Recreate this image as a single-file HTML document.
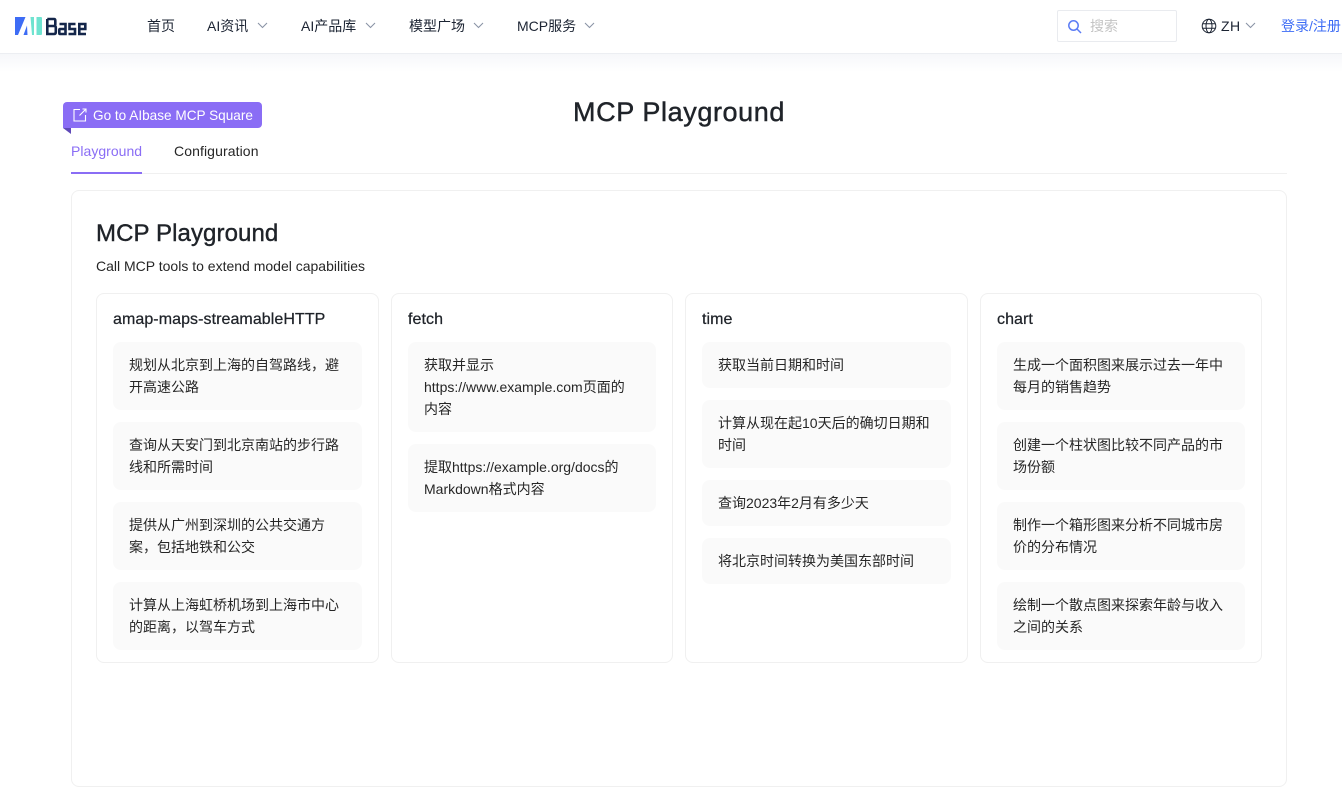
<!DOCTYPE html>
<html lang="zh">
<head>
<meta charset="utf-8">
<title>MCP Playground</title>
<style>
html,body{margin:0;padding:0;width:1342px;height:787px;overflow:hidden;background:#fff;}
body{position:relative;font-family:"Liberation Sans","Noto Sans CJK SC",sans-serif;color:#1f2329;}
.a{position:absolute;white-space:nowrap;}
.hdr{position:absolute;left:0;top:0;width:1342px;height:53px;background:#fff;border-bottom:1px solid #eceef2;}
.grad{position:absolute;left:0;top:54px;width:1342px;height:18px;background:linear-gradient(#f6f7fa,#fff);}
.nav{position:absolute;top:16px;font-size:14px;line-height:20px;color:#1c2433;white-space:nowrap;}
.chev{position:absolute;top:22px;}
.card{position:absolute;top:293px;height:368px;background:#fff;border:1px solid #f0f0f0;border-radius:8px;}
.card h3{position:absolute;left:16px;top:15px;margin:0;font-size:16px;line-height:22px;font-weight:400;color:#1f2329;white-space:nowrap;-webkit-text-stroke:.25px #1f2329;letter-spacing:.07px;}
.it{position:absolute;left:16px;padding:12px 16px;background:#fafafa;border-radius:8px;font-size:14px;line-height:22px;color:#262626;white-space:nowrap;}
.w1{width:217px}.w2{width:216px}
</style>
</head>
<body>
<div class="hdr"></div>
<div class="grad"></div>

<svg class="a" style="left:15px;top:17px" width="72" height="19" viewBox="0 0 72 19">
<rect x="0" y="0" width="17" height="18" fill="#3d6cf5"/>
<rect x="15" y="0" width="12" height="18" rx="1" fill="#6fe3d0"/>
<path d="M10.500 0H15.500L17 18H12.500L12 8.500L8.500 18H3Z" fill="#fff"/>
<rect x="19" y="0" width="2.500" height="18" fill="#fff"/>
<g fill="none" stroke="#14264a" stroke-width="2.600">
<path d="M32.300 2H39Q40.300 2 40.300 3.500V7.500Q40.300 9 39 9H33M39 9Q40.800 9 40.800 10.500V15Q40.800 17 39 17H32.300V2"/>
<path d="M44.500 7H50.500V17H45Q44.300 17 44.300 16V13Q44.300 12 45 12H50.500"/>
<path d="M60.500 7H54.500V12H60V17H53.500"/>
<path d="M71 17H64.300V7H70.300V12H64.300"/>
</g>
</svg>

<div class="nav" style="left:147px">首页</div>
<div class="nav" style="left:207px">AI资讯</div>
<svg class="chev" style="left:257px" width="11" height="7" viewBox="0 0 11 7"><path d="M1 1L5.500 5.500L10 1" fill="none" stroke="#8a94a6" stroke-width="1.100"/></svg>
<div class="nav" style="left:301px">AI产品库</div>
<svg class="chev" style="left:365px" width="11" height="7" viewBox="0 0 11 7"><path d="M1 1L5.500 5.500L10 1" fill="none" stroke="#8a94a6" stroke-width="1.100"/></svg>
<div class="nav" style="left:409px">模型广场</div>
<svg class="chev" style="left:473px" width="11" height="7" viewBox="0 0 11 7"><path d="M1 1L5.500 5.500L10 1" fill="none" stroke="#8a94a6" stroke-width="1.100"/></svg>
<div class="nav" style="left:517px">MCP服务</div>
<svg class="chev" style="left:584px" width="11" height="7" viewBox="0 0 11 7"><path d="M1 1L5.500 5.500L10 1" fill="none" stroke="#8a94a6" stroke-width="1.100"/></svg>

<div class="a" style="left:1057px;top:10px;width:118px;height:30px;border:1px solid #e9ebef;border-radius:2px;background:#fff"></div>
<svg class="a" style="left:1067px;top:19px" width="15" height="15" viewBox="0 0 15 15"><circle cx="6.500" cy="6.500" r="4.700" fill="none" stroke="#5b7cf5" stroke-width="1.500"/><path d="M10 10L14 14" stroke="#5b7cf5" stroke-width="1.500"/></svg>
<div class="a" style="left:1090px;top:16px;font-size:14px;line-height:20px;color:#c4c4c4">搜索</div>

<svg class="a" style="left:1201px;top:18px" width="16" height="16" viewBox="0 0 16 16" fill="none" stroke="#1c2433" stroke-width="1"><circle cx="8" cy="8" r="6.800"/><ellipse cx="8" cy="8" rx="3" ry="6.800"/><path d="M1.500 5.800H14.500M1.500 10.200H14.500"/></svg>
<div class="a" style="left:1221px;top:16px;font-size:14px;line-height:20px;color:#1c2433;letter-spacing:.4px">ZH</div>
<svg class="chev" style="left:1245px" width="11" height="7" viewBox="0 0 11 7"><path d="M1 1L5.500 5.500L10 1" fill="none" stroke="#8a94a6" stroke-width="1.100"/></svg>
<div class="a" style="left:1281px;top:16px;font-size:14px;line-height:20px;color:#3d6cf5">登录/注册</div>

<div class="a" style="left:573px;top:94px;font-size:27px;line-height:36px;font-weight:400;color:#1f2329;-webkit-text-stroke:.45px #1f2329;letter-spacing:.6px">MCP Playground</div>

<div class="a" style="left:63px;top:102px;width:199px;height:26px;background:#8a6df5;border-radius:4px 4px 4px 0"></div>
<svg class="a" style="left:63px;top:128px" width="8" height="6" viewBox="0 0 8 6"><path d="M0 0H8V6Z" fill="#5f49b8"/></svg>
<svg class="a" style="left:73px;top:108px" width="14" height="14" viewBox="0 0 14 14" fill="none" stroke="#fff" stroke-width="1.100"><path d="M7 1.500H1V13H12.500V7M6.500 7.500L13 1M9.500 1H13V4.500"/></svg>
<div class="a" style="left:93px;top:106px;font-size:13.600px;line-height:19px;color:#fff">Go to AIbase MCP Square</div>

<div class="a" style="left:71px;top:142px;font-size:14px;line-height:19px;color:#8a6df5;letter-spacing:.03px">Playground</div>
<div class="a" style="left:174px;top:142px;font-size:14px;line-height:19px;color:#262626;letter-spacing:.1px">Configuration</div>
<div class="a" style="left:71px;top:173px;width:1216px;height:1px;background:#f0f0f0"></div>
<div class="a" style="left:71px;top:172px;width:71px;height:2px;background:#8a6df5"></div>

<div class="a" style="left:71px;top:190px;width:1214px;height:595px;border:1px solid #f0f0f0;border-radius:8px;background:#fff"></div>
<div class="a" style="left:96px;top:218px;font-size:24px;line-height:32px;font-weight:400;color:#1f2329;-webkit-text-stroke:.4px #1f2329;letter-spacing:.1px">MCP Playground</div>
<div class="a" style="left:96px;top:257px;font-size:14px;line-height:18px;color:#262626">Call MCP tools to extend model capabilities</div>

<div class="card" style="left:96px;width:281px">
  <h3>amap-maps-streamableHTTP</h3>
  <div class="it w1" style="top:48px;height:44px">规划从北京到上海的自驾路线，避<br>开高速公路</div>
  <div class="it w1" style="top:128px;height:44px">查询从天安门到北京南站的步行路<br>线和所需时间</div>
  <div class="it w1" style="top:208px;height:44px">提供从广州到深圳的公共交通方<br>案，包括地铁和公交</div>
  <div class="it w1" style="top:288px;height:44px">计算从上海虹桥机场到上海市中心<br>的距离，以驾车方式</div>
</div>

<div class="card" style="left:391px;width:280px">
  <h3>fetch</h3>
  <div class="it w2" style="top:48px;height:66px">获取并显示<br>https://www.example.com页面的<br>内容</div>
  <div class="it w2" style="top:150px;height:44px">提取https://example.org/docs的<br>Markdown格式内容</div>
</div>

<div class="card" style="left:685px;width:281px">
  <h3>time</h3>
  <div class="it w1" style="top:48px;height:22px">获取当前日期和时间</div>
  <div class="it w1" style="top:106px;height:44px">计算从现在起10天后的确切日期和<br>时间</div>
  <div class="it w1" style="top:186px;height:22px">查询2023年2月有多少天</div>
  <div class="it w1" style="top:244px;height:22px">将北京时间转换为美国东部时间</div>
</div>

<div class="card" style="left:980px;width:280px">
  <h3>chart</h3>
  <div class="it w2" style="top:48px;height:44px">生成一个面积图来展示过去一年中<br>每月的销售趋势</div>
  <div class="it w2" style="top:128px;height:44px">创建一个柱状图比较不同产品的市<br>场份额</div>
  <div class="it w2" style="top:208px;height:44px">制作一个箱形图来分析不同城市房<br>价的分布情况</div>
  <div class="it w2" style="top:288px;height:44px">绘制一个散点图来探索年龄与收入<br>之间的关系</div>
</div>
</body>
</html>
